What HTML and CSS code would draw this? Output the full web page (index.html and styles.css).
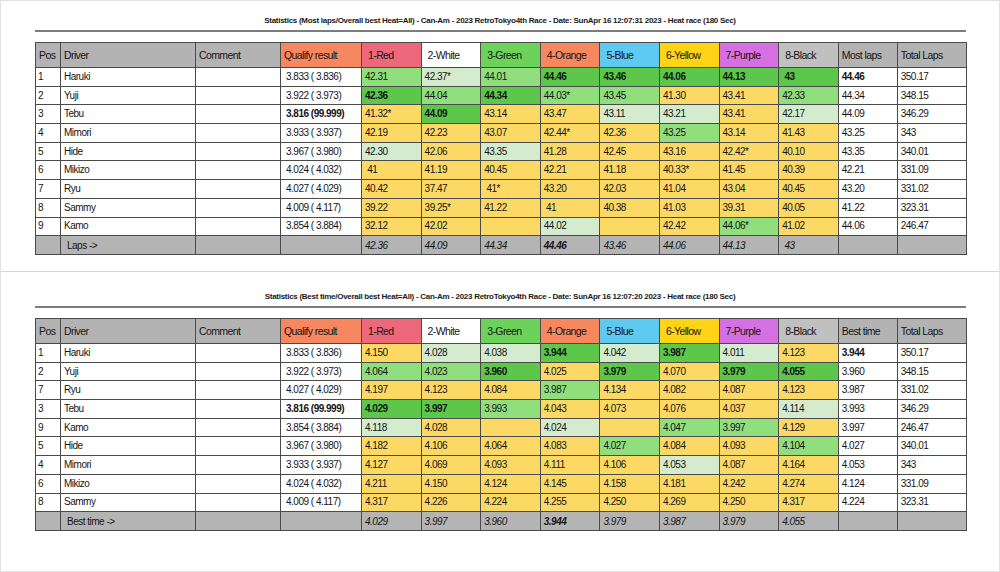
FILE: index.html
```html
<!DOCTYPE html>
<html>
<head>
<meta charset="utf-8">
<link rel="stylesheet" href="styles.css">
</head>
<body>
<div class="page">
  <section class="sheet sheet-top">
    <h1 class="title">Statistics (Most laps/Overall best Heat=All) - Can-Am - 2023 RetroTokyo4th Race - Date: SunApr 16 12:07:31 2023 - Heat race (180 Sec)</h1>
    <div class="rule"></div>
    <table class="stats">
      <colgroup>
        <col class="c-pos"><col class="c-driver"><col class="c-comment"><col class="c-qual">
        <col class="c-lane"><col class="c-lane"><col class="c-lane"><col class="c-lane">
        <col class="c-lane"><col class="c-lane"><col class="c-lane"><col class="c-lane">
        <col class="c-most"><col class="c-total">
      </colgroup>
      <thead>
        <tr class="head">
          <th class="h-gray">Pos</th><th class="h-gray">Driver</th><th class="h-gray">Comment</th><th class="h-orange">Qualify result</th>
          <th class="h-red lane">1-Red</th><th class="h-white lane">2-White</th><th class="h-green lane">3-Green</th><th class="h-orange lane">4-Orange</th>
          <th class="h-blue lane">5-Blue</th><th class="h-yellow lane">6-Yellow</th><th class="h-purple lane">7-Purple</th><th class="h-black lane">8-Black</th>
          <th class="h-gray">Most laps</th><th class="h-gray">Total Laps</th>
        </tr>
      </thead>
      <tbody>
        <tr><td>1</td><td>Haruki</td><td></td><td class="q">3.833 ( 3.836)</td><td class="g2">42.31</td><td class="g3">42.37*</td><td class="g2">44.01</td><td class="g1 b">44.46</td><td class="g1 b">43.46</td><td class="g1 b">44.06</td><td class="g1 b">44.13</td><td class="g1 b">&nbsp;43</td><td class="b">44.46</td><td>350.17</td></tr>
        <tr><td>2</td><td>Yuji</td><td></td><td class="q">3.922 ( 3.973)</td><td class="g1 b">42.36</td><td class="g2">44.04</td><td class="g1 b">44.34</td><td class="g2">44.03*</td><td class="g2">43.45</td><td class="y">41.30</td><td class="y">43.41</td><td class="g2">42.33</td><td>44.34</td><td>348.15</td></tr>
        <tr><td>3</td><td>Tebu</td><td></td><td class="q b">3.816 (99.999)</td><td class="y">41.32*</td><td class="g1 b">44.09</td><td class="y">43.14</td><td class="y">43.47</td><td class="g3">43.11</td><td class="g3">43.21</td><td class="y">43.41</td><td class="g3">42.17</td><td>44.09</td><td>346.29</td></tr>
        <tr><td>4</td><td>Mimori</td><td></td><td class="q">3.933 ( 3.937)</td><td class="y">42.19</td><td class="y">42.23</td><td class="y">43.07</td><td class="y">42.44*</td><td class="y">42.36</td><td class="g2">43.25</td><td class="y">43.14</td><td class="y">41.43</td><td>43.25</td><td>343</td></tr>
        <tr><td>5</td><td>Hide</td><td></td><td class="q">3.967 ( 3.980)</td><td class="g3">42.30</td><td class="y">42.06</td><td class="g3">43.35</td><td class="y">41.28</td><td class="y">42.45</td><td class="y">43.16</td><td class="y">42.42*</td><td class="y">40.10</td><td>43.35</td><td>340.01</td></tr>
        <tr><td>6</td><td>Mikizo</td><td></td><td class="q">4.024 ( 4.032)</td><td class="y">&nbsp;41</td><td class="y">41.19</td><td class="y">40.45</td><td class="y">42.21</td><td class="y">41.18</td><td class="y">40.33*</td><td class="y">41.45</td><td class="y">40.39</td><td>42.21</td><td>331.09</td></tr>
        <tr><td>7</td><td>Ryu</td><td></td><td class="q">4.027 ( 4.029)</td><td class="y">40.42</td><td class="y">37.47</td><td class="y">&nbsp;41*</td><td class="y">43.20</td><td class="y">42.03</td><td class="y">41.04</td><td class="y">43.04</td><td class="y">40.45</td><td>43.20</td><td>331.02</td></tr>
        <tr><td>8</td><td>Sammy</td><td></td><td class="q">4.009 ( 4.117)</td><td class="y">39.22</td><td class="y">39.25*</td><td class="y">41.22</td><td class="y">&nbsp;41</td><td class="y">40.38</td><td class="y">41.03</td><td class="y">39.31</td><td class="y">40.05</td><td>41.22</td><td>323.31</td></tr>
        <tr><td>9</td><td>Kamo</td><td></td><td class="q">3.854 ( 3.884)</td><td class="y">32.12</td><td class="y">42.02</td><td class="y"></td><td class="g3">44.02</td><td class="y"></td><td class="y">42.42</td><td class="g2">44.06*</td><td class="y">41.02</td><td>44.06</td><td>246.47</td></tr>
      </tbody>
      <tfoot>
        <tr class="foot"><td></td><td class="label">Laps -&gt;</td><td></td><td></td><td>42.36</td><td>44.09</td><td>44.34</td><td class="b">44.46</td><td>43.46</td><td>44.06</td><td>44.13</td><td>&nbsp;43</td><td></td><td></td></tr>
      </tfoot>
    </table>
  </section>

  <section class="sheet sheet-bottom">
    <h1 class="title">Statistics (Best time/Overall best Heat=All) - Can-Am - 2023 RetroTokyo4th Race - Date: SunApr 16 12:07:20 2023 - Heat race (180 Sec)</h1>
    <div class="rule"></div>
    <table class="stats">
      <colgroup>
        <col class="c-pos"><col class="c-driver"><col class="c-comment"><col class="c-qual">
        <col class="c-lane"><col class="c-lane"><col class="c-lane"><col class="c-lane">
        <col class="c-lane"><col class="c-lane"><col class="c-lane"><col class="c-lane">
        <col class="c-most"><col class="c-total">
      </colgroup>
      <thead>
        <tr class="head">
          <th class="h-gray">Pos</th><th class="h-gray">Driver</th><th class="h-gray">Comment</th><th class="h-orange">Qualify result</th>
          <th class="h-red lane">1-Red</th><th class="h-white lane">2-White</th><th class="h-green lane">3-Green</th><th class="h-orange lane">4-Orange</th>
          <th class="h-blue lane">5-Blue</th><th class="h-yellow lane">6-Yellow</th><th class="h-purple lane">7-Purple</th><th class="h-black lane">8-Black</th>
          <th class="h-gray">Best time</th><th class="h-gray">Total Laps</th>
        </tr>
      </thead>
      <tbody>
        <tr><td>1</td><td>Haruki</td><td></td><td class="q">3.833 ( 3.836)</td><td class="y">4.150</td><td class="g3">4.028</td><td class="g3">4.038</td><td class="g1 b">3.944</td><td class="g3">4.042</td><td class="g1 b">3.987</td><td class="g3">4.011</td><td class="y">4.123</td><td class="b">3.944</td><td>350.17</td></tr>
        <tr><td>2</td><td>Yuji</td><td></td><td class="q">3.922 ( 3.973)</td><td class="g2">4.064</td><td class="g2">4.023</td><td class="g1 b">3.960</td><td class="y">4.025</td><td class="g1 b">3.979</td><td class="y">4.070</td><td class="g1 b">3.979</td><td class="g1 b">4.055</td><td>3.960</td><td>348.15</td></tr>
        <tr><td>7</td><td>Ryu</td><td></td><td class="q">4.027 ( 4.029)</td><td class="y">4.197</td><td class="y">4.123</td><td class="y">4.084</td><td class="g2">3.987</td><td class="y">4.134</td><td class="y">4.082</td><td class="y">4.087</td><td class="y">4.123</td><td>3.987</td><td>331.02</td></tr>
        <tr><td>3</td><td>Tebu</td><td></td><td class="q b">3.816 (99.999)</td><td class="g1 b">4.029</td><td class="g1 b">3.997</td><td class="g2">3.993</td><td class="y">4.043</td><td class="y">4.073</td><td class="y">4.076</td><td class="y">4.037</td><td class="g3">4.114</td><td>3.993</td><td>346.29</td></tr>
        <tr><td>9</td><td>Kamo</td><td></td><td class="q">3.854 ( 3.884)</td><td class="g3">4.118</td><td class="y">4.028</td><td class="y"></td><td class="g3">4.024</td><td class="y"></td><td class="g2">4.047</td><td class="g2">3.997</td><td class="y">4.129</td><td>3.997</td><td>246.47</td></tr>
        <tr><td>5</td><td>Hide</td><td></td><td class="q">3.967 ( 3.980)</td><td class="y">4.182</td><td class="y">4.106</td><td class="y">4.064</td><td class="y">4.083</td><td class="g2">4.027</td><td class="y">4.084</td><td class="y">4.093</td><td class="g2">4.104</td><td>4.027</td><td>340.01</td></tr>
        <tr><td>4</td><td>Mimori</td><td></td><td class="q">3.933 ( 3.937)</td><td class="y">4.127</td><td class="y">4.069</td><td class="y">4.093</td><td class="y">4.111</td><td class="y">4.106</td><td class="g3">4.053</td><td class="y">4.087</td><td class="y">4.164</td><td>4.053</td><td>343</td></tr>
        <tr><td>6</td><td>Mikizo</td><td></td><td class="q">4.024 ( 4.032)</td><td class="y">4.211</td><td class="y">4.150</td><td class="y">4.124</td><td class="y">4.145</td><td class="y">4.158</td><td class="y">4.181</td><td class="y">4.242</td><td class="y">4.274</td><td>4.124</td><td>331.09</td></tr>
        <tr><td>8</td><td>Sammy</td><td></td><td class="q">4.009 ( 4.117)</td><td class="y">4.317</td><td class="y">4.226</td><td class="y">4.224</td><td class="y">4.255</td><td class="y">4.250</td><td class="y">4.269</td><td class="y">4.250</td><td class="y">4.317</td><td>4.224</td><td>323.31</td></tr>
      </tbody>
      <tfoot>
        <tr class="foot"><td></td><td class="label">Best time -&gt;</td><td></td><td></td><td>4.029</td><td>3.997</td><td>3.960</td><td class="b">3.944</td><td>3.979</td><td>3.987</td><td>3.979</td><td>4.055</td><td></td><td></td></tr>
      </tfoot>
    </table>
  </section>
</div>
</body>
</html>
```
FILE: styles.css
```css
html, body {
  margin: 0;
  padding: 0;
  background: #ffffff;
}

body {
  font-family: "Liberation Sans", Arial, sans-serif;
  color: #151515;
}

.page {
  width: 1000px;
  height: 572px;
  box-sizing: border-box;
  border: 1px solid #e2e2e2;
  overflow: hidden;
}

.sheet {
  box-sizing: border-box;
}

.sheet-top {
  height: 271px;
  padding-top: 15px;
  border-bottom: 1px solid #d6d6d6;
}

.sheet-bottom {
  padding-top: 20px;
}

.title {
  margin: 0;
  font-size: 8px;
  line-height: 10px;
  font-weight: bold;
  text-align: center;
  letter-spacing: -0.28px;
  color: #1a1a1a;
}

.rule {
  margin: 4px 33px 0 34px;
  height: 0;
  border-top: 2px solid #7d7d7d;
}

.stats {
  margin: 10px 0 0 34px;
  width: 931px;
  table-layout: fixed;
  border-collapse: collapse;
  font-size: 10px;
  letter-spacing: -0.5px;
}

.c-pos { width: 25px; }
.c-driver { width: 135px; }
.c-comment { width: 85px; }
.c-qual { width: 81px; }
.c-lane { width: 59.6px; }
.c-most { width: 59px; }
.c-total { width: 69px; }

.stats th,
.stats td {
  border: 1px solid #4a4a4a;
  padding: 0 0 0 3px;
  text-align: left;
  white-space: nowrap;
  overflow: hidden;
  vertical-align: middle;
}

.stats th {
  font-weight: normal;
  font-size: 10.5px;
  letter-spacing: -0.6px;
  height: 24px;
}

.stats th.lane {
  padding-left: 6px;
}

.stats tbody td {
  height: 17.7px;
  line-height: 12px;
}

.stats tbody td:first-child {
  padding-left: 2px;
}

.stats td.q {
  padding-left: 5px;
}

.h-gray { background: #b3b3b3; }
.h-orange { background: #f7875f; }
.h-red { background: #ee687b; }
.h-white { background: #ffffff; }
.h-green { background: #6cd25a; }
.h-blue { background: #5ec9f1; }
.h-yellow { background: #ffd417; }
.h-purple { background: #d66fe1; }
.h-black { background: #c0c0c0; }

.g1 { background: #5cc74a; }
.g2 { background: #90de7c; }
.g3 { background: #d4ebce; }
.y { background: #fcd965; }

.b { font-weight: bold; }

.foot td {
  background: #b4b4b4;
  height: 18px;
  font-style: italic;
}

.foot td.label {
  font-style: normal;
  padding-left: 6px;
}
```
